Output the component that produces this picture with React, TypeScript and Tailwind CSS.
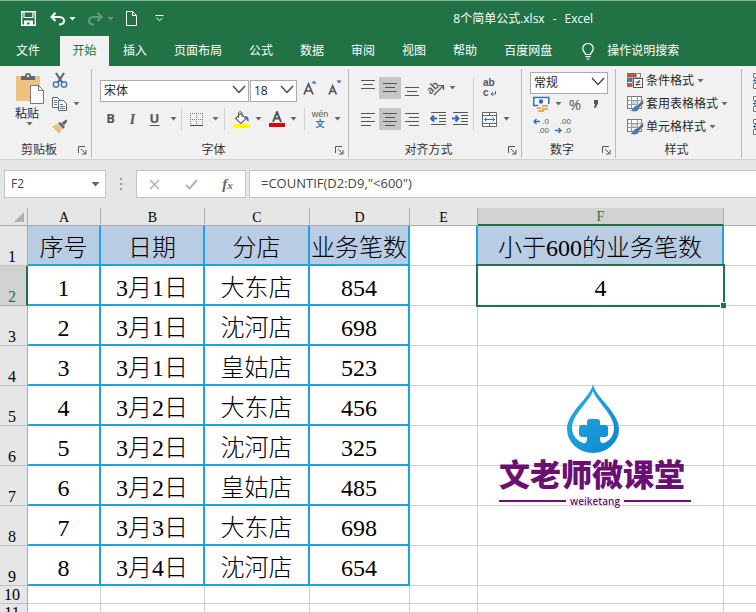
import React from "react";
import clsx from "clsx";

const UI_FONT = "font-['Open_Sans','Noto_Sans_CJK_SC',sans-serif]";
const SHEET_FONT = "font-['Liberation_Serif','Noto_Sans_CJK_SC_Light','Noto_Sans_CJK_SC',serif]";

function Caret({ light = false }: { light?: boolean }) {
  return (
    <svg width="7" height="4" viewBox="0 0 7 4" className={light ? "text-white" : "text-[#666]"} aria-hidden="true">
      <path d="M0.500 0h6L3.500 3.500z" fill="currentColor" />
    </svg>
  );
}

function Tool({ label, className, children }: { label: string; className?: string; children: React.ReactNode }) {
  return (
    <button type="button" aria-label={label} className={clsx("flex h-[22px] shrink-0 items-center justify-center text-[#555]", className)}>
      {children}
    </button>
  );
}

function Divider() {
  return <span className="h-[22px] w-px shrink-0 bg-[#d0d0d0]" />;
}

function Combo({ label, options, className }: { label: string; options: string[]; className: string }) {
  return (
    <label className={clsx("relative block h-[22px] shrink-0", className)}>
      <select aria-label={label} className="h-full w-full appearance-none border border-[#ababab] bg-white px-[3px] text-[12px] leading-5 text-[#262626]">
        {options.map((o) => (
          <option key={o}>{o}</option>
        ))}
      </select>
      <svg className="pointer-events-none absolute right-[3px] top-[8px]" width="14" height="9" viewBox="0 0 14 9" fill="none" aria-hidden="true">
        <path d="M1 1l6 6.500L13 1" stroke="#444" strokeWidth="1.300" />
      </svg>
    </label>
  );
}

function Group({ title, launcher = true, className, children }: { title: string; launcher?: boolean; className: string; children: React.ReactNode }) {
  return (
    <section aria-label={title} className={clsx("flex shrink-0 flex-col border-r border-[#b8b8b8]", className)}>
      <div className="h-[73px]">{children}</div>
      <footer className="flex h-4 items-center pr-1">
        <span className="flex-1 text-center text-[12px] leading-4 text-[#333]">{title}</span>
        {launcher ? (
          <button type="button" aria-label={title + "设置"}>
            <svg width="9" height="9" viewBox="0 0 9 9" fill="none" stroke="#555" aria-hidden="true">
              <path d="M0.500 7V0.500H7M3 3l4.500 4.500M8 4v4H4" />
            </svg>
          </button>
        ) : null}
      </footer>
    </section>
  );
}

function Lines({ y, w }: { y: number[]; w: number[] | "left" | "right" }) {
  const widths = w === "left" || w === "right" ? [14, 10, 14, 10] : w;
  return (
    <svg width="14" height="16" viewBox="0 0 14 16" aria-hidden="true">
      {y.map((top, i) => {
        const width = widths[i];
        const x = w === "left" ? 0 : w === "right" ? 14 - width : (14 - width) / 2;
        return <rect key={top} x={x} y={top} width={width} height="1" fill="#555" />;
      })}
    </svg>
  );
}

function Indent({ flip = false }: { flip?: boolean }) {
  return (
    <svg width="17" height="14" viewBox="0 0 17 14" fill="none" aria-hidden="true">
      <path d="M1 0.500h15M9 3.500h7M9 6.500h7M9 9.500h7M1 12.500h15" stroke="#555" />
      {flip ? <path d="M0 6.500h5M3.500 3.500l3 3-3 3" stroke="#2f6fb5" strokeWidth="2" /> : <path d="M2 6.500h5M4 3.500l-3 3 3 3" stroke="#2f6fb5" strokeWidth="2" />}
    </svg>
  );
}

function TableBrush() {
  return (
    <svg width="17" height="16" viewBox="0 0 17 16" fill="none" aria-hidden="true">
      <rect x="0.500" y="0.500" width="14" height="12" fill="#fff" stroke="#777" />
      <rect x="5" y="5" width="5" height="3" fill="#c5dcf0" />
      <path d="M0.500 4.500h14M0.500 8.500h14M4.500 0.500v12M10.500 0.500v12" stroke="#999" />
      <path d="M16.500 3v4.500l-5 5-2.500-2z" fill="#666" stroke="#f1f1f1" strokeWidth="0.600" />
      <path d="M9.500 9.500c-3 0-2.500 4-6 5 3 1.500 8 1.500 8.500-2.500z" fill="#3f7fc0" />
    </svg>
  );
}

function ConditionalIcon() {
  return (
    <svg width="17" height="16" viewBox="0 0 17 16" fill="none" aria-hidden="true">
      <rect x="0.500" y="0.500" width="13" height="13" fill="#fff" stroke="#888" />
      <rect x="0" y="0" width="9" height="4" fill="#c9513d" />
      <rect x="0" y="5" width="5" height="4" fill="#3f7fc0" />
      <rect x="0" y="10" width="5" height="4" fill="#c9513d" />
      <path d="M9.500 0v5M0 4.500h14M5.500 4v10" stroke="#aaa" />
      <rect x="6.500" y="5.500" width="9" height="9" fill="#fff" stroke="#555" />
      <path d="M8.500 9h5M8.500 11.500h5M12.500 7l-3 6" stroke="#444" />
    </svg>
  );
}

function TitleBar() {
  return (
    <header className="flex h-9 shrink-0 items-center border-t border-[#86b598] bg-[#217346] pl-[21px] text-white">
      <button type="button" aria-label="保存" className="mr-[14px]">
        <svg width="15" height="15" viewBox="0 0 15 15" fill="none" aria-hidden="true">
          <path d="M0.700 0.700h13.600v13.600H0.700z" stroke="#fff" strokeWidth="1.400" />
          <path d="M3 1v5.500h9V1" stroke="#fff" strokeWidth="1.200" />
          <path d="M3 14V9.500h9V14H8.500v-2.500H6V14z" fill="#fff" />
        </svg>
      </button>
      <button type="button" aria-label="撤消" className="mr-3 flex items-center gap-1">
        <svg width="15" height="14" viewBox="0 0 15 14" fill="none" stroke="#fff" strokeWidth="2" aria-hidden="true">
          <path d="M5.500 0.800L1.500 5l4 4M2 5h7.500c3 0 4.500 2 4.500 3.800 0 2.400-2 3.700-5 3.700" />
        </svg>
        <Caret light />
      </button>
      <button type="button" aria-label="恢复" className="mr-3 flex items-center gap-1 opacity-30">
        <svg width="15" height="14" viewBox="0 0 15 14" fill="none" stroke="#fff" strokeWidth="2" aria-hidden="true">
          <path d="M9.500 0.800l4 4.200-4 4M13 5H5.500C2.500 5 1 7 1 8.800c0 2.400 2 3.700 5 3.700" />
        </svg>
        <Caret light />
      </button>
      <button type="button" aria-label="新建" className="mr-[18px]">
        <svg width="11" height="15" viewBox="0 0 11 15" fill="none" stroke="#fff" aria-hidden="true">
          <path d="M0.500 0.500h6l4 4v10h-10zM6.500 0.500v4h4" />
        </svg>
      </button>
      <button type="button" aria-label="自定义快速访问工具栏">
        <svg width="9" height="7" viewBox="0 0 9 7" fill="none" stroke="#fff" aria-hidden="true">
          <path d="M0.500 0.500h8M1.500 2.800l3 3 3-3" />
        </svg>
      </button>
      <h1 className="ml-auto flex gap-2 whitespace-nowrap pr-[163px] text-[12px]">
        <span>8个简单公式.xlsx</span>
        <span>-</span>
        <span>Excel</span>
      </h1>
    </header>
  );
}

const TABS = ["插入", "页面布局", "公式", "数据", "审阅", "视图", "帮助", "百度网盘"];

function TabBar() {
  return (
    <nav className="flex h-[30px] shrink-0 gap-px bg-[#217346] text-[12px] whitespace-nowrap text-white">
      <button type="button" className="-mr-px shrink-0 pl-4 pr-5">文件</button>
      <button type="button" className="w-[49px] shrink-0 bg-[#f1f1f1] text-[#217346]">开始</button>
      {TABS.map((t) => (
        <button key={t} type="button" className="shrink-0 px-[13px]">{t}</button>
      ))}
      <button type="button" className="ml-3 flex shrink-0 items-center gap-[13px] pl-1">
        <svg width="12" height="17" viewBox="0 0 12 17" fill="none" stroke="#fff" strokeWidth="1.200" aria-hidden="true">
          <path d="M3.500 11.500c0-2-2.800-2.800-2.800-6a5.300 5 0 0 1 10.600 0c0 3.200-2.800 4-2.800 6zM3.500 13.700h5M4.500 16h3" />
        </svg>
        操作说明搜索
      </button>
    </nav>
  );
}

function Clipboard() {
  return (
    <Group title="剪贴板" className="w-[92px]">
      <div className="flex pl-[15px] pt-1">
        <button type="button" className="flex w-[29px] flex-col items-start text-[12px] leading-4 text-[#262626]">
          <svg width="29" height="31" viewBox="0 0 29 31" className="mb-[2px]" aria-hidden="true">
            <rect x="1" y="3" width="24" height="25" fill="#ecc27d" />
            <path d="M6 7V3h4a3 3 0 0 1 6 0h4v4z" fill="#666" />
            <circle cx="13" cy="3" r="1.200" fill="#f1f1f1" />
            <path d="M15.500 12.500h8l5 5v13h-13z" fill="#fff" stroke="#777" />
            <path d="M23.500 12.500v5h5" fill="none" stroke="#777" />
          </svg>
          粘贴
          <span className="ml-[11px]"><Caret /></span>
        </button>
        <div className="ml-2 flex flex-col items-start">
          <Tool label="剪切">
            <svg width="16" height="17" viewBox="0 0 16 17" fill="none" className="mb-2" aria-hidden="true">
              <path d="M4 1l6.500 10M12 1L5.500 11" stroke="#666" strokeWidth="2.200" />
              <circle cx="4" cy="12.500" r="2.700" stroke="#3f7fc0" strokeWidth="1.500" />
              <circle cx="12" cy="12.500" r="2.700" stroke="#3f7fc0" strokeWidth="1.500" />
            </svg>
          </Tool>
          <Tool label="复制" className="gap-[5px] pb-1">
            <svg width="16" height="15" viewBox="0 0 16 15" fill="#fff" stroke="#666" aria-hidden="true">
              <path d="M0.500 0.500h5l3 3v7h-8z" />
              <path d="M6.500 3.500h5l3 3v7h-8z" />
              <path d="M2 3.500h3M2 5.500h3M2 7.500h3M8 7.500h3M8 9.500h5M8 11.500h5" stroke="#3f7fc0" />
            </svg>
            <Caret />
          </Tool>
          <Tool label="格式刷" className="pb-1">
            <svg width="16" height="15" viewBox="0 0 16 15" aria-hidden="true">
              <path d="M0 7.500l5-2.500 5 5-3 5z" fill="#ecc27d" />
              <path d="M6 4.500l2-1.500 5 5-2 2z" fill="#666" />
              <path d="M9.500 4L14 0.500 15.500 2 12 6.500z" fill="#666" />
            </svg>
          </Tool>
        </div>
      </div>
    </Group>
  );
}

function FontGroup() {
  return (
    <Group title="字体" className="w-[257px]">
      <div className="flex items-center gap-px pl-2 pt-[8px]">
        <Combo label="字体名称" options={["宋体"]} className="w-[149px]" />
        <Combo label="字号" options={["18"]} className="w-[47px]" />
        <Tool label="增大字号" className="w-6">
          <svg width="14" height="16" viewBox="0 0 14 16" fill="none" aria-hidden="true">
            <path d="M1 14.500L5.500 4l4.500 10.500M2.500 11h6" stroke="#555" strokeWidth="1.700" />
            <path d="M8.500 3.500h5L11 0.500z" fill="#2f6fb5" />
          </svg>
        </Tool>
        <Tool label="减小字号" className="w-6">
          <svg width="14" height="16" viewBox="0 0 14 16" fill="none" aria-hidden="true">
            <path d="M1 14.500L4.700 6l3.700 8.500M2.200 11.500h5" stroke="#555" strokeWidth="1.700" />
            <path d="M8.500 0.500h5L11 3.500z" fill="#2f6fb5" />
          </svg>
        </Tool>
      </div>
      <div className="mt-[9px] flex items-center pl-2">
        <Tool label="加粗" className="w-[21px] text-[13px] font-bold">B</Tool>
        <Tool label="倾斜" className="w-[23px] font-['Liberation_Serif',serif] text-[14px] font-bold italic">I</Tool>
        <Tool label="下划线" className="w-[21px] text-[13px] font-bold underline underline-offset-2">U</Tool>
        <Tool label="下划线选项" className="w-[16px]"><Caret /></Tool>
        <Divider />
        <Tool label="边框" className="w-[28px]">
          <svg width="13" height="13" viewBox="0 0 13 13" fill="none" aria-hidden="true">
            <path d="M0.500 0v12M6.500 0v12M12.500 0v12M0 0.500h13M0 6.500h13" stroke="#777" strokeDasharray="1 1" />
            <path d="M0 12.500h13" stroke="#444" />
          </svg>
        </Tool>
        <Tool label="边框选项" className="w-[14px] pr-1"><Caret /></Tool>
        <Divider />
        <Tool label="填充颜色" className="ml-1 w-[24px]">
          <svg width="17" height="17" viewBox="0 0 17 17" fill="none" aria-hidden="true">
            <path d="M7.500 2.500l5.500 5-5 5L2.500 7.500z" fill="#fff" stroke="#666" strokeWidth="1.200" />
            <path d="M5.500 7V2a1.800 1.800 0 0 1 3.500 0v4" stroke="#666" />
            <path d="M12 5c3 0 4 2 3.500 6-1.500-1-2-3-2.500-4z" fill="#2f6fb5" />
            <rect x="0" y="13" width="17" height="4" fill="#ffff00" />
          </svg>
        </Tool>
        <Tool label="填充颜色选项" className="w-[10px]"><Caret /></Tool>
        <Tool label="字体颜色" className="ml-[3px] w-[22px]">
          <svg width="16" height="16" viewBox="0 0 16 16" fill="none" aria-hidden="true">
            <path d="M4 11L8 1l4 10M5.500 7.500h5" stroke="#555" strokeWidth="2" />
            <rect x="0" y="12" width="16" height="4" fill="#e00000" />
          </svg>
        </Tool>
        <Tool label="字体颜色选项" className="mr-[5px] w-[11px]"><Caret /></Tool>
        <Divider />
        <Tool label="拼音指南" className="ml-1 w-[22px] flex-col font-['Liberation_Sans','Noto_Sans_CJK_SC',sans-serif] text-[9px] leading-[10px]">
          <span>wén</span>
          <span className="font-bold text-[#2f6fb5]">文</span>
        </Tool>
        <Tool label="拼音选项" className="w-[12px]"><Caret /></Tool>
      </div>
    </Group>
  );
}

function AlignGroup() {
  return (
    <Group title="对齐方式" className="w-[173px]">
      <div className="flex pl-2 pt-[8px]">
        <div className="flex w-[117px] flex-col gap-[9px] border-r border-[#d0d0d0]">
          <div className="flex">
            <Tool label="顶端对齐" className="w-[22px]"><Lines y={[0, 4, 8]} w={[14, 10, 14]} /></Tool>
            <Tool label="垂直居中" className="w-[22px] bg-[#c6c6c6]"><Lines y={[3, 7, 11]} w={[14, 10, 14]} /></Tool>
            <Tool label="底端对齐" className="w-[22px]"><Lines y={[7, 11, 15]} w={[14, 10, 14]} /></Tool>
            <Tool label="方向" className="ml-1 gap-1">
              <svg width="18" height="18" viewBox="0 0 18 18" fill="none" className="overflow-visible" aria-hidden="true">
                <text x="-1" y="13" transform="rotate(-45 5 9)" fontSize="11" fontWeight="600" fill="#555">ab</text>
                <path d="M7 16L16 7M12 6.500h4.500V11" stroke="#555" strokeWidth="1.200" />
              </svg>
              <Caret />
            </Tool>
          </div>
          <div className="flex">
            <Tool label="左对齐" className="w-[22px]"><Lines y={[2, 6, 10, 14]} w="left" /></Tool>
            <Tool label="居中" className="w-[22px] bg-[#c6c6c6]"><Lines y={[2, 6, 10, 14]} w={[14, 10, 14, 10]} /></Tool>
            <Tool label="右对齐" className="w-[22px]"><Lines y={[2, 6, 10, 14]} w="right" /></Tool>
            <Tool label="减少缩进量" className="ml-1 w-[22px]"><Indent /></Tool>
            <Tool label="增加缩进量" className="w-[22px]"><Indent flip /></Tool>
          </div>
        </div>
        <div className="ml-2 flex flex-col items-start gap-[9px]">
          <Tool label="自动换行" className="flex-col items-start pl-px font-['Liberation_Sans',sans-serif] text-[10px] font-bold leading-[10px]">
            <span>ab</span>
            <span className="flex items-end gap-px">
              c
              <svg width="6" height="7" viewBox="0 0 6 7" fill="none" aria-hidden="true">
                <path d="M5.500 0v3H1M3 1L1 3l2 2" stroke="#2f6fb5" />
              </svg>
            </span>
          </Tool>
          <Tool label="合并后居中" className="gap-[5px]">
            <svg width="16" height="15" viewBox="0 0 16 15" fill="none" aria-hidden="true">
              <path d="M0.500 0.500h14v14h-14zM0.500 3.500h14M0.500 11.500h14M7.500 0.500v3M7.500 11.500v3" stroke="#666" fill="#fff" />
              <path d="M2.500 7.500h10M4.500 5.500l-2 2 2 2M10.500 5.500l2 2-2 2" stroke="#2f6fb5" />
            </svg>
            <Caret />
          </Tool>
        </div>
      </div>
    </Group>
  );
}

const DECIMALS = "flex-col items-end font-['Liberation_Sans',sans-serif] text-[8px] leading-[9px] text-[#333]";

function NumberGroup() {
  return (
    <Group title="数字" className="w-[94px]">
      <div className="pl-2">
        <Combo label="数字格式" options={["常规"]} className="w-[78px]" />
        <div className="flex pl-[3px] pt-[2px]">
          <Tool label="会计数字格式" className="gap-[5px]">
            <svg width="17" height="16" viewBox="0 0 17 16" aria-hidden="true">
              <rect x="0.800" y="1.500" width="15" height="8" fill="#fff" stroke="#2f6fb5" strokeWidth="1.500" />
              <circle cx="8" cy="5.500" r="2.200" fill="#2f6fb5" />
              <path d="M6 8h11v8H4v-4z" fill="#f1f1f1" />
              <path d="M9 9h6v2H9zM9 12h6v2H9zM4 11h4v2H4zM5 14h6v2H5z" fill="#e0b060" />
            </svg>
            <Caret />
          </Tool>
          <Tool label="百分比样式" className="w-[26px] text-[15px]">%</Tool>
          <Tool label="千位分隔样式" className="w-4">
            <svg width="6" height="8" viewBox="0 0 6 8" aria-hidden="true">
              <path d="M1 0h4v3.500L2.500 8H1l1-4H1z" fill="#555" />
            </svg>
          </Tool>
        </div>
        <div className="flex gap-[6px] pl-[3px]">
          <Tool label="增加小数位数" className={DECIMALS}>
            <span className="flex w-4 items-center justify-between">
              <svg width="7" height="7" viewBox="0 0 7 7" fill="none" aria-hidden="true">
                <path d="M7 3.500H1M3.500 1L1 3.500 3.500 6" stroke="#2f6fb5" strokeWidth="1.300" />
              </svg>
              .0
            </span>
            <span>.00</span>
          </Tool>
          <Tool label="减少小数位数" className={DECIMALS}>
            <span>.00</span>
            <span className="flex w-4 items-center justify-between">
              <svg width="7" height="7" viewBox="0 0 7 7" fill="none" aria-hidden="true">
                <path d="M0 3.500h6M3.500 1L6 3.500 3.500 6" stroke="#2f6fb5" strokeWidth="1.300" />
              </svg>
              .0
            </span>
          </Tool>
        </div>
      </div>
    </Group>
  );
}

function StyleGroup() {
  const items = [
    { label: "条件格式", icon: <ConditionalIcon /> },
    { label: "套用表格格式", icon: <TableBrush /> },
    { label: "单元格样式", icon: <TableBrush /> },
  ];
  return (
    <Group title="样式" launcher={false} className="w-[126px]">
      <div className="flex flex-col items-start pl-[11px]">
        {items.map((it) => (
          <button key={it.label} type="button" className="flex h-[23px] items-center gap-[2px] whitespace-nowrap text-[12px] text-[#262626]">
            {it.icon}
            <span>{it.label}</span>
            <span className="ml-px"><Caret /></span>
          </button>
        ))}
      </div>
    </Group>
  );
}

function CellsGroup() {
  return (
    <section aria-label="单元格" className="flex w-[60px] shrink-0 flex-col pl-[11px]">
      {["插入单元格", "删除单元格", "单元格格式"].map((l) => (
        <button key={l} type="button" aria-label={l} className="flex h-[23px] items-center">
          <svg width="16" height="16" viewBox="0 0 16 16" fill="#fff" stroke="#777" aria-hidden="true">
            <path d="M0.500 0.500h15v4h-15zM0.500 10.500h15v5h-15zM5.500 0.500v4M5.500 10.500v5" />
            <path d="M0 7.500h6M3 5l-2.500 2.500L3 10" stroke="#2f6fb5" />
          </svg>
        </button>
      ))}
    </section>
  );
}

function FormulaBar() {
  return (
    <div className="flex h-[49px] shrink-0 gap-[3px] border-t border-[#d0d0d0] bg-[#e6e6e6] pb-[10px] pl-1 pt-[10px]">
      <div className="flex w-[102px] shrink-0 items-center border border-[#c6c6c6] bg-white pr-[5px]">
        <input aria-label="名称框" defaultValue="F2" className="w-full min-w-0 bg-transparent pl-[6px] text-[12px] text-[#444] outline-none" />
        <svg width="9" height="5" viewBox="0 0 9 5" className="shrink-0" aria-hidden="true">
          <path d="M0.500 0h8L4.500 4.500z" fill="#666" />
        </svg>
      </div>
      <div className="flex w-6 shrink-0 items-center justify-center">
        <svg width="2" height="12" viewBox="0 0 2 12" fill="#999" aria-hidden="true">
          <path d="M0 0h2v2H0zM0 5h2v2H0zM0 10h2v2H0z" />
        </svg>
      </div>
      <div className="flex w-[110px] shrink-0 items-center justify-around border border-[#c6c6c6] bg-white">
        <button type="button" aria-label="取消">
          <svg width="11" height="11" viewBox="0 0 11 11" stroke="#b5b5b5" strokeWidth="1.600" aria-hidden="true"><path d="M1 1l9 9M10 1l-9 9" /></svg>
        </button>
        <button type="button" aria-label="输入">
          <svg width="13" height="11" viewBox="0 0 13 11" fill="none" stroke="#b5b5b5" strokeWidth="2" aria-hidden="true"><path d="M1 6l3.500 3.500L12 1" /></svg>
        </button>
        <button type="button" aria-label="插入函数" className="font-['Liberation_Serif',serif] text-[15px] font-bold italic leading-4 text-[#666]">
          f<span className="text-[11px]">x</span>
        </button>
      </div>
      <input aria-label="编辑栏" defaultValue={'=COUNTIF(D2:D9,"<600")'} className="min-w-0 flex-1 border border-r-0 border-[#c6c6c6] bg-white pl-[11px] text-[13px] text-[#444] outline-none" />
    </div>
  );
}

const HEADINGS = ["序号", "日期", "分店", "业务笔数"];
const ROWS = [
  ["1", "3月1日", "大东店", "854"],
  ["2", "3月1日", "沈河店", "698"],
  ["3", "3月1日", "皇姑店", "523"],
  ["4", "3月2日", "大东店", "456"],
  ["5", "3月2日", "沈河店", "325"],
  ["6", "3月2日", "皇姑店", "485"],
  ["7", "3月3日", "大东店", "698"],
  ["8", "3月4日", "沈河店", "654"],
];

const BLUE = "border-b-2 border-r-2 border-[#1ca5dc]";
const GRID = "border-b border-r border-[#d0d0d0]";

function RowHead({ n, active = false }: { n: number; active?: boolean }) {
  return (
    <th
      scope="row"
      className={clsx(
        "border-b p-0 align-bottom text-[16px] font-normal leading-4",
        active ? "border-r-2 border-b-[#ababab] border-r-[#217346] bg-[#d2d2d2] pr-[2px] text-[#217346]" : "border-r border-b-[#c0c0c0] border-r-[#ababab] bg-[#e6e6e6] pr-[3px] text-black",
      )}
    >
      {n}
    </th>
  );
}

function Logo() {
  return (
    <figure className="absolute left-[499px] top-[176px] flex w-[192px] flex-col items-center text-[#6b0f73] font-['Open_Sans','Noto_Sans_CJK_SC',sans-serif]">
      <svg width="52" height="70" viewBox="0 0 52 70" className="mr-1" aria-hidden="true">
        <defs>
          <linearGradient id="drop" x1="0" y1="0" x2="1" y2="1">
            <stop offset="0" stopColor="#2ab0e8" />
            <stop offset="1" stopColor="#0c86cc" />
          </linearGradient>
        </defs>
        <path
          fillRule="evenodd"
          fill="url(#drop)"
          d="M26 0C28 13 52 28 52 45a26 24 0 0 1-52 0C0 28 24 13 26 0zM26 7C22 18 5 31 5 44c0 7 5 13 11 15 3 1 4-1 4-6h-5q-3 0-3-3v-6q0-3 3-3h5v-3q0-3 3-3h7q3 0 3 3v3h5q3 0 3 3v6q0 3-3 3h-5c0 5 1 7 4 6 6-2 10-8 10-15C47 31 30 18 26 7z"
        />
      </svg>
      <figcaption className="flex w-full flex-col">
        <strong className="whitespace-nowrap text-[31px] font-black leading-[40px]">文老师微课堂</strong>
        <span className="flex items-center gap-1 text-[10px] font-semibold leading-[14px]">
          <span className="h-[2px] flex-1 bg-current" />
          weiketang
          <span className="h-[2px] flex-1 bg-current" />
        </span>
      </figcaption>
    </figure>
  );
}

function Sheet() {
  return (
    <main className={clsx("relative min-h-0 flex-1 overflow-hidden bg-white", SHEET_FONT)}>
      <table className="w-full table-fixed border-separate border-spacing-0 text-center text-black">
        <colgroup>
          <col className="w-[28px]" />
          <col className="w-[73px]" />
          <col className="w-[104px]" />
          <col className="w-[105px]" />
          <col className="w-[100px]" />
          <col className="w-[68px]" />
          <col className="w-[246px]" />
          <col />
        </colgroup>
        <thead>
          <tr className="h-[18px] text-[14px] leading-[15px]">
            <td className="border-b border-r border-[#ababab] bg-[#e6e6e6] p-0">
              <svg width="10" height="10" viewBox="0 0 10 10" className="ml-auto mr-[3px]" aria-hidden="true">
                <path d="M10 0v10H0z" fill="#b0b0b0" />
              </svg>
            </td>
            {["A", "B", "C", "D", "E"].map((c) => (
              <th key={c} scope="col" className="border-b border-r border-[#ababab] bg-[#e6e6e6] p-0 pt-[2px] font-normal">{c}</th>
            ))}
            <th scope="col" className="border-b-2 border-r border-b-[#217346] border-r-[#ababab] bg-[#d2d2d2] p-0 pt-px font-normal text-[#217346]">F</th>
            <td className="border-b border-[#ababab] bg-[#e6e6e6] p-0" />
          </tr>
        </thead>
        <tbody className="text-[24px] leading-8">
          <tr className="h-10">
            <RowHead n={1} />
            {HEADINGS.map((h) => (
              <td key={h} className={clsx("whitespace-nowrap bg-[#b8cce4] p-0 pt-[6px]", BLUE)}>{h}</td>
            ))}
            <td className="border-b border-r-2 border-b-[#d0d0d0] border-r-[#1ca5dc] p-0" />
            <td className={clsx("whitespace-nowrap bg-[#b8cce4] p-0 pt-[6px]", BLUE)}>小于600的业务笔数</td>
            <td className="border-b border-[#d0d0d0] p-0" />
          </tr>
          {ROWS.map((row, i) => (
            <tr key={row[0]} className="h-10">
              <RowHead n={i + 2} active={i === 0} />
              {row.map((v, c) => (
                <td key={c} className={clsx("whitespace-nowrap p-0 pt-[6px]", BLUE)}>{v}</td>
              ))}
              <td className={clsx("p-0", GRID)} />
              {i === 0 ? (
                <td className={clsx("relative p-0 pt-1", GRID)}>
                  4
                  <span className="absolute -inset-x-[2px] -bottom-[2px] -top-[2px] border-2 border-[#217346]" />
                  <span className="absolute -bottom-[3px] -right-[3px] size-[6px] border-l border-t border-white bg-[#217346]" />
                </td>
              ) : (
                <td className={clsx("p-0", GRID)} />
              )}
              <td className="border-b border-[#d0d0d0] p-0" />
            </tr>
          ))}
          {[10, 11].map((n) => (
            <tr key={n} className="h-[18px]">
              <RowHead n={n} />
              {[0, 1, 2, 3, 4, 5].map((c) => (
                <td key={c} className={clsx("p-0", GRID)} />
              ))}
              <td className="border-b border-[#d0d0d0] p-0" />
            </tr>
          ))}
        </tbody>
      </table>
      <Logo />
    </main>
  );
}

export default function App() {
  return (
    <div className={clsx("flex h-screen flex-col overflow-hidden bg-[#e6e6e6]", UI_FONT)}>
      <TitleBar />
      <TabBar />
      <div className="flex h-[93px] shrink-0 overflow-hidden bg-[#f1f1f1] pb-px pt-[3px]">
        <Clipboard />
        <FontGroup />
        <AlignGroup />
        <NumberGroup />
        <StyleGroup />
        <CellsGroup />
      </div>
      <FormulaBar />
      <Sheet />
    </div>
  );
}
